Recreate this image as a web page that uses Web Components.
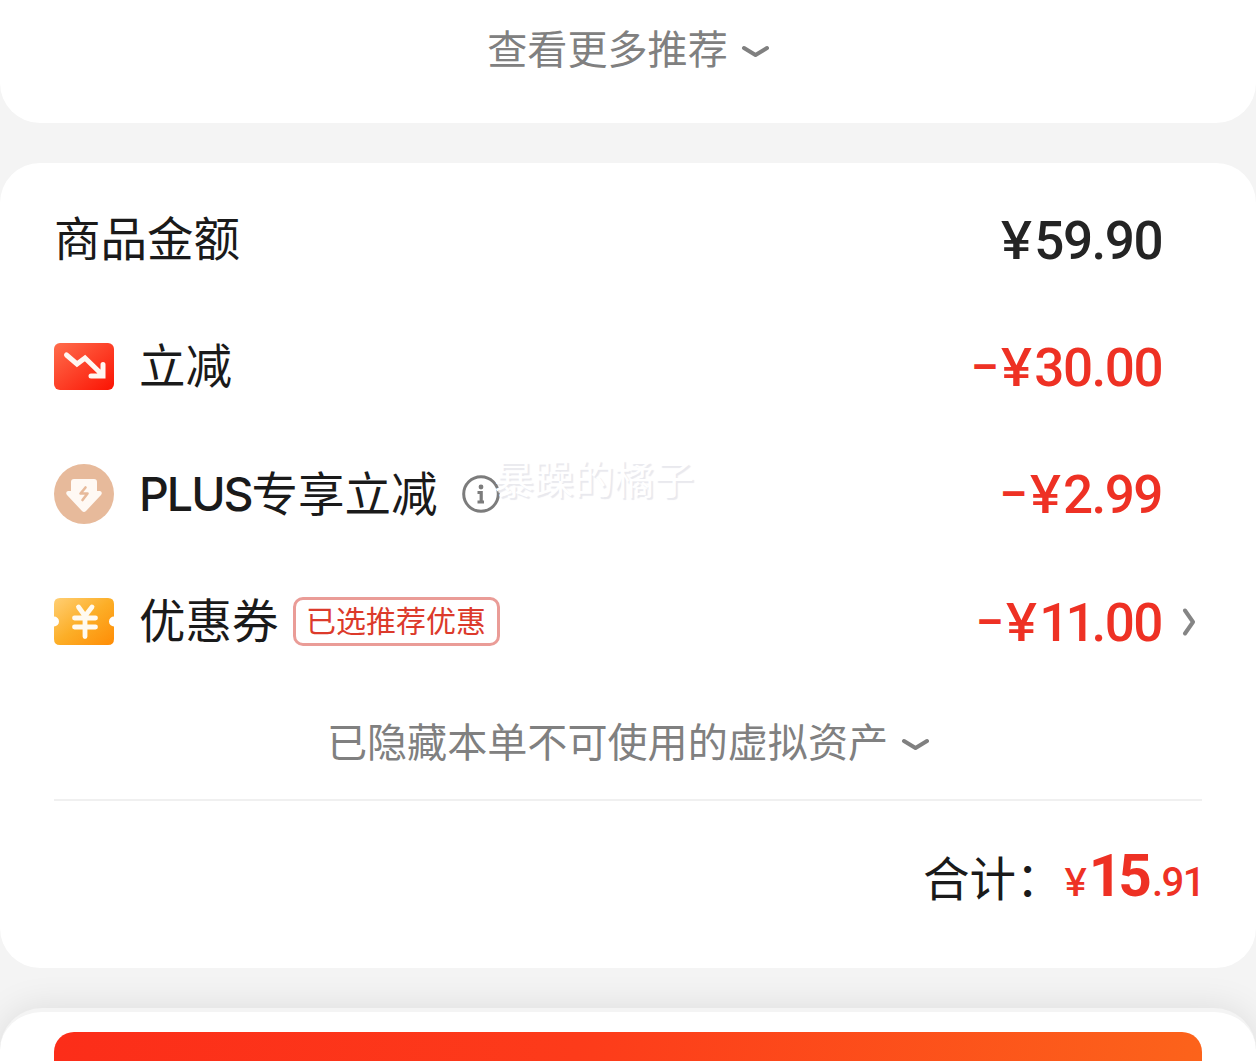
<!DOCTYPE html>
<html lang="zh-CN">
<head>
<meta charset="utf-8">
<title>确认订单</title>
<style>
    html, body {
        margin: 0;
        height: 1061px;
        overflow: hidden;
        background: #f4f4f4;
        font-family: Inter, "Noto Sans CJK SC", sans-serif;
        color: #1a1a1a;
    }
</style>
</head>
<body>
<order-page>
    <order-card class="more">
        <fold-link style="height: 100px">查看更多推荐</fold-link>
    </order-card>
    <order-card class="summary">
        <price-row>
            商品金额
            <price-amount slot="amount" value="59.90"></price-amount>
        </price-row>
        <price-row>
            <row-icon slot="icon" name="drop"></row-icon>
            立减
            <price-amount slot="amount" value="30.00" minus></price-amount>
        </price-row>
        <price-row>
            <row-icon slot="icon" name="plus"></row-icon>
            <span class="latin">PLUS</span>专享立减
            <row-icon slot="extra" name="info"></row-icon>
            <price-amount slot="amount" value="2.99" minus></price-amount>
        </price-row>
        <price-row>
            <row-icon slot="icon" name="coupon"></row-icon>
            优惠券
            <coupon-tag slot="extra">已选推荐优惠</coupon-tag>
            <price-amount slot="amount" value="11.00" minus></price-amount>
            <row-icon slot="arrow" name="arrow"></row-icon>
        </price-row>
        <fold-link style="height: 112px; padding-top: 2px">已隐藏本单不可使用的虚拟资产</fold-link>
        <order-total whole="15" cents=".91">合计：</order-total>
    </order-card>
    <submit-bar></submit-bar>
    <user-mark slot="overlay">暴躁的橘子</user-mark>
</order-page>

<script>
class OrderPage extends HTMLElement {
    constructor() {
        super();
        this.attachShadow({ mode: "open" });
        this.shadowRoot.innerHTML = `
            <style>
                :host {
                    display: flex;
                    flex-direction: column;
                    position: relative;
                    height: 1061px;
                    overflow: hidden;
                }
                ::slotted(order-card.more) {
                    height: 123px;
                    border-radius: 0 0 40px 40px;
                    margin-bottom: 40px;
                }
                ::slotted(order-card.summary) {
                    height: 805px;
                    border-radius: 40px;
                    margin-bottom: 40px;
                    padding: 13px 54px 0;
                }
            </style>
            <slot></slot>
            <slot name="overlay"></slot>
        `;
    }
}

class OrderCard extends HTMLElement {
    constructor() {
        super();
        this.attachShadow({ mode: "open" });
        this.shadowRoot.innerHTML = `
            <style>
                :host {
                    display: flex;
                    flex-direction: column;
                    flex: none;
                    box-sizing: border-box;
                    background: #fff;
                }
            </style>
            <slot></slot>
        `;
    }
}

class FoldLink extends HTMLElement {
    constructor() {
        super();
        this.attachShadow({ mode: "open" });
        this.shadowRoot.innerHTML = `
            <style>
                :host {
                    display: flex;
                    align-items: center;
                    justify-content: center;
                    gap: 13px;
                    flex: none;
                    font-size: 40.1px;
                    line-height: 56px;
                    color: #808080;
                    white-space: nowrap;
                }
                svg {
                    display: block;
                    margin-top: 3px;
                }
            </style>
            <span><slot></slot></span>
            <svg width="28" height="14" viewBox="0 0 28 14" fill="none" stroke="#808080" stroke-width="4" stroke-linecap="round" stroke-linejoin="round">
                <path d="M3 3L14.500 10L26 3"/>
            </svg>
        `;
    }
}

class PriceRow extends HTMLElement {
    constructor() {
        super();
        this.attachShadow({ mode: "open" });
        this.shadowRoot.innerHTML = `
            <style>
                :host {
                    display: flex;
                    align-items: center;
                    flex: none;
                    height: 127.3px;
                    font-size: 46.5px;
                    line-height: 64px;
                    white-space: nowrap;
                }
                ::slotted([slot="icon"]) {
                    margin-right: 25px;
                }
                ::slotted(.latin) {
                    font-weight: 500;
                    letter-spacing: -2px;
                }
                .label {
                    padding-bottom: 1px;
                }
                .amount {
                    margin-left: auto;
                    padding-top: 2px;
                }
                .arrow {
                    width: 20px;
                    padding-left: 20px;
                }
            </style>
            <slot name="icon"></slot>
            <span class="label"><slot></slot></span>
            <slot name="extra"></slot>
            <div class="amount"><slot name="amount"></slot></div>
            <div class="arrow"><slot name="arrow"></slot></div>
        `;
    }
}

class PriceAmount extends HTMLElement {
    constructor() {
        super();
        this.attachShadow({ mode: "open" });
    }
    connectedCallback() {
        const minus = this.hasAttribute("minus");
        // a leading run of 1s is set tighter than the other figures
        const value = this.getAttribute("value").replace(/^1+/, `<span class="ones">$&</span>`);
        this.shadowRoot.innerHTML = `
            <style>
                :host {
                    display: flex;
                    align-items: center;
                    font: 500 53px/64px Roboto, sans-serif;
                    color: ${minus ? "#ee3124" : "#242424"};
                    letter-spacing: -1.5px;
                }
                .minus {
                    font-size: 42px;
                    font-weight: 700;
                    margin-right: 6px;
                }
                .yen {
                    font-family: Inter, sans-serif;
                    font-size: 52px;
                    letter-spacing: 0;
                    margin-right: 3px;
                    transform: scaleX(1.1);
                }
                .ones {
                    letter-spacing: -4px;
                }
            </style>
            ${minus ? `<span class="minus">–</span>` : ""}
            <span class="yen">¥</span><span>${value}</span>
        `;
    }
}

class CouponTag extends HTMLElement {
    constructor() {
        super();
        this.attachShadow({ mode: "open" });
        this.shadowRoot.innerHTML = `
            <style>
                :host {
                    display: block;
                    box-sizing: border-box;
                    width: 207px;
                    height: 49px;
                    margin-left: 14px;
                    border: 3px solid #ea9c97;
                    border-radius: 10px;
                    font-size: 30px;
                    line-height: 42px;
                    text-align: center;
                    color: #dc3a2b;
                }
            </style>
            <slot></slot>
        `;
    }
}

class OrderTotal extends HTMLElement {
    constructor() {
        super();
        this.attachShadow({ mode: "open" });
    }
    connectedCallback() {
        this.shadowRoot.innerHTML = `
            <style>
                :host {
                    display: flex;
                    align-items: baseline;
                    justify-content: flex-end;
                    border-top: 2px solid #f0f0f0;
                    padding-top: 43px;
                    font-size: 46.5px;
                    line-height: 64px;
                }
                .price {
                    display: flex;
                    align-items: baseline;
                    margin-left: 2px;
                    font-family: Roboto, sans-serif;
                    font-weight: 500;
                    font-size: 40px;
                    color: #ee3124;
                }
                .yen {
                    font-family: Inter, sans-serif;
                    font-size: 38px;
                    transform: scaleX(1.08);
                }
                .whole {
                    font-size: 58.5px;
                    font-weight: 700;
                    letter-spacing: -4px;
                    margin-left: 3px;
                    margin-right: 4px;
                }
                .cents {
                    letter-spacing: -1.5px;
                    margin-right: -2px;
                }
            </style>
            <span><slot></slot></span>
            <span class="price"><span class="yen">¥</span><span class="whole">${this.getAttribute("whole")}</span><span class="cents">${this.getAttribute("cents")}</span></span>
        `;
    }
}

class SubmitBar extends HTMLElement {
    constructor() {
        super();
        this.attachShadow({ mode: "open" });
        this.shadowRoot.innerHTML = `
            <style>
                :host {
                    display: block;
                    flex: none;
                    box-sizing: border-box;
                    height: 180px;
                    padding: 20px 54px;
                    background: #fff;
                    border-top: 4px solid #f4f4f4;
                    border-radius: 42px 42px 0 0;
                    box-shadow: 0 0 36px rgba(0, 0, 0, 0.1);
                }
                div {
                    height: 120px;
                    border-radius: 20px;
                    background: linear-gradient(100deg, #fc2d19, #fd3b1a 45%, #fc641b);
                }
            </style>
            <div></div>
        `;
    }
}

class UserMark extends HTMLElement {
    constructor() {
        super();
        this.attachShadow({ mode: "open" });
        this.shadowRoot.innerHTML = `
            <style>
                :host {
                    position: absolute;
                    left: 494px;
                    top: 451px;
                    font-size: 40px;
                    line-height: 58px;
                    color: #fff;
                    text-shadow: 2px 2px 1px #e9e9ee;
                    pointer-events: none;
                    white-space: nowrap;
                }
            </style>
            <slot></slot>
        `;
    }
}

const icons = {
    drop: `
        <svg width="60" height="47" viewBox="0 0 60 47" fill="none">
            <defs>
                <linearGradient id="g" x1="0" y1="0" x2="1" y2="1">
                    <stop offset="0" stop-color="#ff6d4c"/>
                    <stop offset="1" stop-color="#fb1303"/>
                </linearGradient>
            </defs>
            <rect width="60" height="47" rx="6" fill="url(#g)"/>
            <path d="M12.500 12L23 21L31 15L48 31.500M49 21.500V33H37" stroke="#fff7f2" stroke-width="5" stroke-linecap="round"/>
        </svg>`,
    plus: `
        <svg width="60" height="60" viewBox="0 0 60 60">
            <circle cx="30" cy="30" r="30" fill="#e7ba9b"/>
            <path d="M20 15H40Q43 15 43 18V27H46Q49 28 47 31L32 47Q30 49 28 47L13 31Q11 28 14 27H17V18Q17 15 20 15Z" fill="#fff9f4"/>
            <path d="M31.500 23.500L26.500 29.500H33.500L28.500 36" fill="none" stroke="#e7ba9b" stroke-width="2.600" stroke-linecap="round" stroke-linejoin="round"/>
        </svg>`,
    coupon: `
        <svg width="60" height="47" viewBox="0 0 60 47" fill="none">
            <defs>
                <linearGradient id="g" x1="0" y1="0" x2="1" y2="1">
                    <stop offset="0" stop-color="#ffcf74"/>
                    <stop offset="0.500" stop-color="#fcae27"/>
                    <stop offset="1" stop-color="#ff8c05"/>
                </linearGradient>
            </defs>
            <path d="M6 0H54Q60 0 60 6V18.500A5 5 0 0 0 60 28.500V41Q60 47 54 47H6Q0 47 0 41V28.500A5 5 0 0 0 0 18.500V6Q0 0 6 0Z" fill="url(#g)"/>
            <path d="M24.500 9L31 18L38 9M20.500 20H41.500M20.500 29H41.500M31 18V38.500" stroke="#fffaf0" stroke-width="4.800" stroke-linecap="round"/>
        </svg>`,
    info: `
        <svg width="38" height="38" viewBox="0 0 38 38" fill="none">
            <circle cx="19" cy="19" r="17.300" stroke="#7c7c7c" stroke-width="3"/>
            <circle cx="19" cy="12" r="2.400" fill="#7c7c7c"/>
            <path d="M15.500 17.500H19.200V27M15.500 27H22" stroke="#7c7c7c" stroke-width="3.200"/>
        </svg>`,
    arrow: `
        <svg width="14" height="28" viewBox="0 0 14 28" fill="none">
            <path d="M3 2.500L11 14L3 25.500" stroke="#858585" stroke-width="4" stroke-linecap="round" stroke-linejoin="round"/>
        </svg>`
};

class RowIcon extends HTMLElement {
    constructor() {
        super();
        this.attachShadow({ mode: "open" });
    }
    connectedCallback() {
        const name = this.getAttribute("name");
        this.shadowRoot.innerHTML = `
            <style>
                :host {
                    display: block;
                    flex: none;
                    ${name === "info" ? "margin-left: 24px;" : ""}
                }
                svg {
                    display: block;
                }
            </style>
            ${icons[name]}
        `;
    }
}

customElements.define("order-page", OrderPage);
customElements.define("order-card", OrderCard);
customElements.define("fold-link", FoldLink);
customElements.define("price-row", PriceRow);
customElements.define("price-amount", PriceAmount);
customElements.define("coupon-tag", CouponTag);
customElements.define("order-total", OrderTotal);
customElements.define("submit-bar", SubmitBar);
customElements.define("user-mark", UserMark);
customElements.define("row-icon", RowIcon);
</script>
</body>
</html>
